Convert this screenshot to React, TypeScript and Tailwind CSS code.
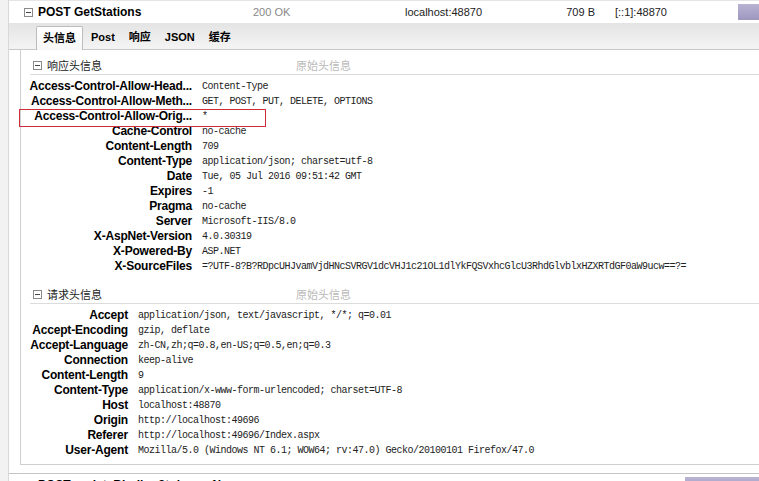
const responseHeaders: [string, string][] = [
  ['Access-Control-Allow-Head...', 'Content-Type'],
  ['Access-Control-Allow-Meth...', 'GET, POST, PUT, DELETE, OPTIONS'],
  ['Access-Control-Allow-Orig...', '*'],
  ['Cache-Control', 'no-cache'],
  ['Content-Length', '709'],
  ['Content-Type', 'application/json; charset=utf-8'],
  ['Date', 'Tue, 05 Jul 2016 09:51:42 GMT'],
  ['Expires', '-1'],
  ['Pragma', 'no-cache'],
  ['Server', 'Microsoft-IIS/8.0'],
  ['X-AspNet-Version', '4.0.30319'],
  ['X-Powered-By', 'ASP.NET'],
  ['X-SourceFiles', '=?UTF-8?B?RDpcUHJvamVjdHNcSVRGV1dcVHJ1c21OL1dlYkFQSVxhcGlcU3RhdGlvblxHZXRTdGF0aW9ucw==?='],
];

const requestHeaders: [string, string][] = [
  ['Accept', 'application/json, text/javascript, */*; q=0.01'],
  ['Accept-Encoding', 'gzip, deflate'],
  ['Accept-Language', 'zh-CN,zh;q=0.8,en-US;q=0.5,en;q=0.3'],
  ['Connection', 'keep-alive'],
  ['Content-Length', '9'],
  ['Content-Type', 'application/x-www-form-urlencoded; charset=UTF-8'],
  ['Host', 'localhost:48870'],
  ['Origin', 'http://localhost:49696'],
  ['Referer', 'http://localhost:49696/Index.aspx'],
  ['User-Agent', 'Mozilla/5.0 (Windows NT 6.1; WOW64; rv:47.0) Gecko/20100101 Firefox/47.0'],
];

function ToggleBox({ open = true }: { open?: boolean }) {
  return (
    <svg width="9" height="9" viewBox="0 0 9 9" className="shrink-0">
      <rect x="0.5" y="0.5" width="8" height="8" fill="#fff" stroke="#8a8a8a" />
      <line x1="2" y1="4.5" x2="7" y2="4.5" stroke="#444" />
      {!open && <line x1="4.5" y1="2" x2="4.5" y2="7" stroke="#444" />}
    </svg>
  );
}

function RequestRow({ name, status, host, size, ip, barLeft, open }: {
  name: string; status: string; host: string; size: string; ip: string; barLeft: number; open: boolean;
}) {
  return (
    <div className="flex items-center h-[22px] font-['Liberation_Sans',Arial,sans-serif] text-[11px] text-[#222]">
      <div className="w-[15px]" />
      <ToggleBox open={open} />
      <div className="w-[220px] pl-[5px] font-bold text-[12px] text-black truncate">{name}</div>
      <div className="w-[152px] text-[#888]">{status}</div>
      <div className="w-[150px]">{host}</div>
      <div className="w-[40px] text-right">{size}</div>
      <div className="w-[20px]" />
      <div className="flex-1">{ip}</div>
      <div className="h-[16px] bg-gradient-to-b from-[#b9b4d3] to-[#9d97c0]" style={{ width: 759 - barLeft }} />
    </div>
  );
}

function HeaderSection({ title, rows, labelWidth, rowPad, className }: {
  title: string; rows: [string, string][]; labelWidth: string; rowPad: string; className: string;
}) {
  return (
    <div className={className}>
      <div className="ml-[9px] h-[19px] flex items-center border-b border-[#dcdcdc] font-['Noto_Sans_CJK_SC',sans-serif] text-[11px]">
        <div className="w-[3px]" />
        <ToggleBox />
        <span className="w-[254px] pl-[5px] text-[#222]">{title}</span>
        <span className="text-[#b9b9b9]">原始头信息</span>
      </div>
      <div className="mt-[4px]">
        {rows.map(([k, v]) => (
          <div key={k} className={`flex items-center h-[15px] ${rowPad}`}>
            <div className={`${labelWidth} shrink-0 text-right whitespace-nowrap font-['Liberation_Sans',Arial,sans-serif] font-bold text-[12px] tracking-[-0.2px] text-black leading-[15px]`}>
              {k}
            </div>
            <div className="pl-[10px] whitespace-nowrap font-['Liberation_Mono',monospace] text-[10px] tracking-[-0.5px] text-[#222] leading-[15px]">
              {v}
            </div>
          </div>
        ))}
      </div>
    </div>
  );
}

export default function App() {
  const tabs = ['头信息', 'Post', '响应', 'JSON', '缓存'];
  return (
    <div className="relative w-[759px] h-[481px] overflow-hidden bg-white flex">
      <div className="w-[9px] shrink-0 bg-[#f2f2f2] border-r border-[#d8d8d8]" />
      <div className="flex-1 min-w-0">
        <div className="border-t border-[#e6e6e6]">
          <RequestRow name="POST GetStations" status="200 OK" host="localhost:48870" size="709 B" ip="[::1]:48870" barLeft={738} open />
        </div>

        {/* tabs */}
        <div className="h-[27px] flex items-end pl-[27px] gap-[2px] bg-gradient-to-b from-[#e4e4e4] to-[#f4f4f4] border-b border-[#c8c8c8]">
          {tabs.map((t, i) => (
            <div
              key={t}
              className={`px-[6px] flex items-center font-['Liberation_Sans','Noto_Sans_CJK_SC',sans-serif] font-bold text-[11px] text-black ${
                i === 0
                  ? 'h-[24px] bg-gradient-to-b from-[#ffffff] to-[#f7f7f7] border border-b-0 border-[#bdbdbd] rounded-t-[2px] -mb-px'
                  : 'h-[23px]'
              }`}
            >
              {t}
            </div>
          ))}
        </div>

        {/* panel */}
        <div className="ml-[11px] border-l border-b border-[#cfcfcf] pb-[6px]">
          <HeaderSection title="响应头信息" rows={responseHeaders} labelWidth="w-[163px]" rowPad="pl-[8px]" className="pt-[6px]" />
          <HeaderSection title="请求头信息" rows={requestHeaders} labelWidth="w-[105px]" rowPad="pl-[2px]" className="mt-[11px]" />
        </div>

        <div className="mt-[8px] border-t border-[#c4c4c4]">
          <RequestRow name="POST updateBinding?token=a1b..." status="200 OK" host="localhost:51558" size="75 B" ip="[::1]:51558" barLeft={685} open={false} />
        </div>
      </div>

      {/* annotation */}
      <div className="absolute left-[19px] top-[109px] w-[247px] h-[18px] border border-[#cf2c3c]" />
    </div>
  );
}
